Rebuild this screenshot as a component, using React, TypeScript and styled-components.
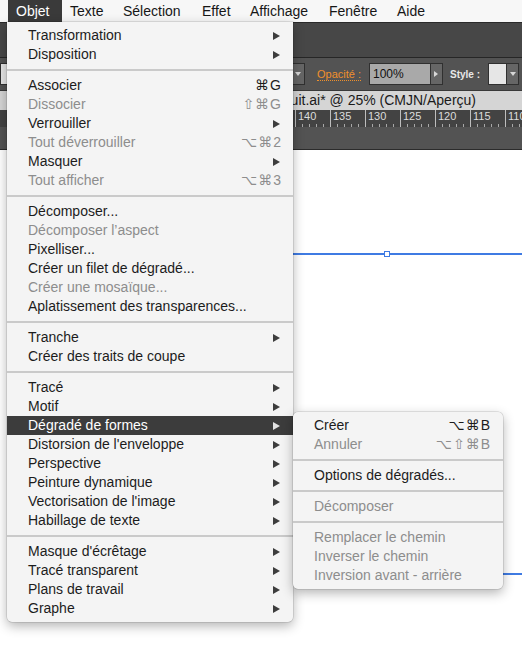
import React from 'react'
import styled, { createGlobalStyle, css } from 'styled-components'

const GlobalStyle = createGlobalStyle`
  html, body {
    margin: 0;
    padding: 0;
    background: #fff;
  }
  body {
    font-family: 'Liberation Sans', Arial, sans-serif;
  }
`

type MenuEntry =
  | { kind: 'sep' }
  | {
      kind: 'item'
      label: string
      shortcut?: string
      sub?: boolean
      disabled?: boolean
      active?: boolean
    }

const SEP: MenuEntry = { kind: 'sep' }
const item = (
  label: string,
  opts: { shortcut?: string; sub?: boolean; disabled?: boolean; active?: boolean } = {}
): MenuEntry => ({ kind: 'item', label, ...opts })

const MAIN_MENU: MenuEntry[] = [
  item('Transformation', { sub: true }),
  item('Disposition', { sub: true }),
  SEP,
  item('Associer', { shortcut: '⌘G' }),
  item('Dissocier', { shortcut: '⇧⌘G', disabled: true }),
  item('Verrouiller', { sub: true }),
  item('Tout déverrouiller', { shortcut: '⌥⌘2', disabled: true }),
  item('Masquer', { sub: true }),
  item('Tout afficher', { shortcut: '⌥⌘3', disabled: true }),
  SEP,
  item('Décomposer...'),
  item('Décomposer l’aspect', { disabled: true }),
  item('Pixelliser...'),
  item('Créer un filet de dégradé...'),
  item('Créer une mosaïque...', { disabled: true }),
  item('Aplatissement des transparences...'),
  SEP,
  item('Tranche', { sub: true }),
  item('Créer des traits de coupe'),
  SEP,
  item('Tracé', { sub: true }),
  item('Motif', { sub: true }),
  item('Dégradé de formes', { sub: true, active: true }),
  item("Distorsion de l'enveloppe", { sub: true }),
  item('Perspective', { sub: true }),
  item('Peinture dynamique', { sub: true }),
  item("Vectorisation de l'image", { sub: true }),
  item('Habillage de texte', { sub: true }),
  SEP,
  item("Masque d'écrêtage", { sub: true }),
  item('Tracé transparent', { sub: true }),
  item('Plans de travail', { sub: true }),
  item('Graphe', { sub: true }),
]

const BLEND_MENU: MenuEntry[] = [
  item('Créer', { shortcut: '⌥⌘B' }),
  item('Annuler', { shortcut: '⌥⇧⌘B', disabled: true }),
  SEP,
  item('Options de dégradés...'),
  SEP,
  item('Décomposer', { disabled: true }),
  SEP,
  item('Remplacer le chemin', { disabled: true }),
  item('Inverser le chemin', { disabled: true }),
  item('Inversion avant - arrière', { disabled: true }),
]

// widths follow the spacing of the mac menu bar in the capture
const MENU_TITLES: { label: string; width: number }[] = [
  { label: 'Objet', width: 54 },
  { label: 'Texte', width: 53 },
  { label: 'Sélection', width: 79 },
  { label: 'Effet', width: 48 },
  { label: 'Affichage', width: 79 },
  { label: 'Fenêtre', width: 68 },
  { label: 'Aide', width: 44 },
]
const RULER_MARKS = [180, 175, 170, 165, 160, 155, 150, 145, 140, 135, 130, 125, 120, 115, 110]

const Screen = styled.div`
  position: relative;
  width: 522px;
  height: 661px;
  overflow: hidden;
  display: flex;
  flex-direction: column;
  background: #fff;
`

/* ---- mac menu bar ---- */

const MenuBar = styled.div`
  display: flex;
  flex-shrink: 0;
  height: 22px;
  padding-left: 8px;
  background: #f7f7f7;
`

const MenuTitle = styled.div<{ $active?: boolean; $w: number }>`
  box-sizing: border-box;
  width: ${({ $w }) => $w}px;
  padding-left: 8px;
  line-height: 22px;
  font-size: 14px;
  white-space: nowrap;
  color: #161616;
  ${({ $active }) =>
    $active &&
    css`
      background: #3a3a3a;
      color: #fff;
    `}
`

/* ---- illustrator chrome ---- */

const Toolbar = styled.div`
  flex-shrink: 0;
  height: 34px;
  background: #474747;
  border-top: 1px solid #2a2a2a;
  border-bottom: 1px solid #262626;
`

const ControlBar = styled.div`
  flex-shrink: 0;
  display: flex;
  align-items: center;
  justify-content: space-between;
  height: 32px;
  padding-right: 3px;
  background: #535353;
`

const ControlGroup = styled.div`
  display: flex;
  align-items: center;
`

const Field = styled.div<{ $w: number; $light?: boolean }>`
  box-sizing: border-box;
  width: ${({ $w }) => $w}px;
  height: 22px;
  border: 1px solid #303030;
  background: ${({ $light }) => ($light ? '#e6e6e6' : '#a9a9a9')};
  font-size: 12px;
  line-height: 20px;
  padding-left: 3px;
  color: #111;
`

const DropButton = styled.div`
  box-sizing: border-box;
  display: flex;
  align-items: center;
  justify-content: center;
  width: 12px;
  height: 22px;
  border: 1px solid #303030;
  border-left: none;
  background: #666;
`

const DownTri = styled.span`
  width: 0;
  height: 0;
  border-left: 3.5px solid transparent;
  border-right: 3.5px solid transparent;
  border-top: 4px solid #d8d8d8;
`

const RightTri = styled.span`
  width: 0;
  height: 0;
  border-top: 3.5px solid transparent;
  border-bottom: 3.5px solid transparent;
  border-left: 4px solid #d8d8d8;
`

const ControlLabel = styled.span<{ $accent?: boolean }>`
  white-space: nowrap;
  ${({ $accent }) =>
    $accent
      ? css`
          font-size: 11px;
          color: #f0902c;
          border-bottom: 1px dotted #f0902c;
          margin: 0 8px 0 12px;
        `
      : css`
          font-size: 10px;
          color: #e8e8e8;
          font-weight: bold;
          margin: 0 8px 0 7px;
        `}
`

const DocTab = styled.div`
  flex-shrink: 0;
  height: 19px;
  border-top: 1px solid #393939;
  background: #d5d5d5;
  overflow: hidden;
`

const DocTitle = styled.div`
  width: 476px;
  text-align: right;
  white-space: nowrap;
  overflow: hidden;
  font-size: 14px;
  line-height: 19px;
  color: #1a1a1a;
`

const Ruler = styled.div`
  flex-shrink: 0;
  display: flex;
  height: 17px;
  padding-left: 15px;
  background: #434343;
  overflow: hidden;
`

const RulerCell = styled.div`
  flex-shrink: 0;
  box-sizing: border-box;
  width: 35px;
  height: 100%;
  border-left: 1px solid #bdbdbd;
  padding-left: 2px;
  font-size: 11px;
  line-height: 13px;
  color: #dcdcdc;
  overflow: hidden;
  background-image: repeating-linear-gradient(
    to right,
    transparent 0 6px,
    #a8a8a8 6px 7px
  );
  background-size: 100% 3px;
  background-position: bottom left;
  background-repeat: no-repeat;
`

const PanelStrip = styled.div`
  flex-shrink: 0;
  height: 22px;
  background: #535353;
  border-bottom: 1px solid #2b2b2b;
`

const Canvas = styled.div`
  position: relative;
  flex: 1;
  background: #fff;
`

const PathLine = styled.div<{ $top: number }>`
  position: absolute;
  left: 150px;
  right: 0;
  top: ${({ $top }) => $top}px;
  height: 2px;
  background: #3f7be3;
`

const Anchor = styled.div`
  position: absolute;
  left: 384px;
  top: 101px;
  box-sizing: border-box;
  width: 6px;
  height: 6px;
  border: 1.5px solid #3f7be3;
  background: #fff;
`

/* ---- menus ---- */

const MenuPanel = styled.div`
  position: absolute;
  box-sizing: border-box;
  padding: 4px 0;
  background: #f4f4f4;
  box-shadow: 0 4px 12px rgba(0, 0, 0, 0.3), 0 0 0 0.5px rgba(0, 0, 0, 0.18);
  font-size: 14px;
`

const MainMenu = styled(MenuPanel)`
  top: 22px;
  left: 7px;
  width: 286px;
  border-radius: 0 0 5px 5px;
`

const SubMenu = styled(MenuPanel)`
  top: 412px;
  left: 293px;
  width: 210px;
  border-radius: 5px;
`

const Row = styled.div<{ $disabled?: boolean; $active?: boolean; $tight?: boolean }>`
  box-sizing: border-box;
  display: flex;
  align-items: center;
  height: 19px;
  padding: 0 ${({ $tight }) => ($tight ? 12 : 11)}px 1px 21px;
  color: ${({ $disabled }) => ($disabled ? '#8d8d8d' : '#1c1c1c')};
  ${({ $active }) =>
    $active &&
    css`
      background: #3c3c3c;
      color: #fff;
    `}
`

const RowLabel = styled.span`
  flex: 1;
  white-space: nowrap;
`

const Shortcut = styled.span`
  font-family: 'Liberation Sans', 'DejaVu Sans', sans-serif;
  letter-spacing: 1px;
  white-space: nowrap;
`

const SubArrow = styled.span`
  width: 0;
  height: 0;
  margin: 1px 2px 0 0;
  border-top: 4.5px solid transparent;
  border-bottom: 4.5px solid transparent;
  border-left: 7px solid currentColor;
  opacity: 0.85;
`

const Separator = styled.div`
  height: 12px;
  display: flex;
  align-items: center;

  &::before {
    content: '';
    flex: 1;
    height: 2px;
    background: #cacaca;
  }
`

function MenuRows({ entries, tight }: { entries: MenuEntry[]; tight?: boolean }) {
  return (
    <>
      {entries.map((e, i) =>
        e.kind === 'sep' ? (
          <Separator key={i} />
        ) : (
          <Row key={i} $disabled={e.disabled} $active={e.active} $tight={tight}>
            <RowLabel>{e.label}</RowLabel>
            {e.shortcut && <Shortcut>{e.shortcut}</Shortcut>}
            {e.sub && <SubArrow />}
          </Row>
        )
      )}
    </>
  )
}

export default function App() {
  return (
    <>
      <GlobalStyle />
      <Screen>
        <MenuBar>
          {MENU_TITLES.map((t, i) => (
            <MenuTitle key={t.label} $w={t.width} $active={i === 0}>
              {t.label}
            </MenuTitle>
          ))}
        </MenuBar>

        <Toolbar />

        <ControlBar>
          <ControlGroup>
            <Field $w={20} $light />
          </ControlGroup>
          <ControlGroup>
            <Field $w={22} $light />
            <DropButton>
              <DownTri />
            </DropButton>
            <ControlLabel $accent>Opacité :</ControlLabel>
            <Field $w={62}>100%</Field>
            <DropButton>
              <RightTri />
            </DropButton>
            <ControlLabel>Style :</ControlLabel>
            <Field $w={19} $light />
            <DropButton>
              <DownTri />
            </DropButton>
          </ControlGroup>
        </ControlBar>

        <DocTab>
          <DocTitle>Minuit.ai* @ 25% (CMJN/Aperçu)</DocTitle>
        </DocTab>

        <Ruler>
          {RULER_MARKS.map((n) => (
            <RulerCell key={n}>{n}</RulerCell>
          ))}
        </Ruler>

        <PanelStrip />

        <Canvas>
          <PathLine $top={103} />
          <Anchor />
          <PathLine $top={423} />
        </Canvas>

        <MainMenu>
          <MenuRows entries={MAIN_MENU} />
        </MainMenu>

        <SubMenu>
          <MenuRows entries={BLEND_MENU} tight />
        </SubMenu>
      </Screen>
    </>
  )
}
